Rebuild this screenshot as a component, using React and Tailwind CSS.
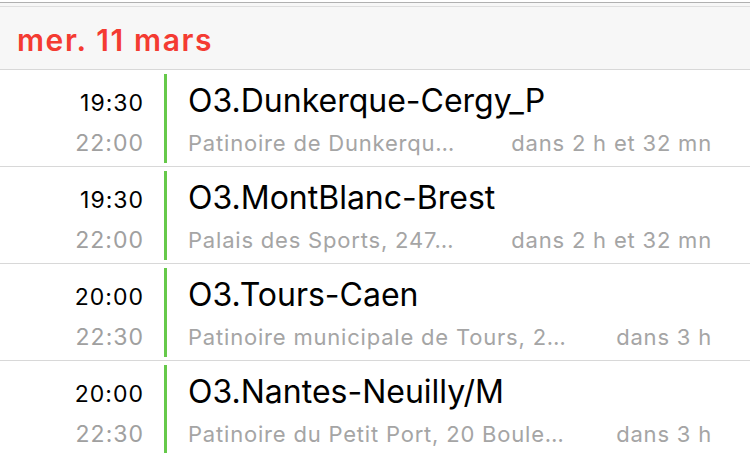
const events = [
  {
    start: "19:30",
    end: "22:00",
    title: "O3.Dunkerque-Cergy_P",
    place: "Patinoire de Dunkerqu…",
    when: "dans 2 h et 32 mn",
  },
  {
    start: "19:30",
    end: "22:00",
    title: "O3.MontBlanc-Brest",
    place: "Palais des Sports, 247…",
    when: "dans 2 h et 32 mn",
  },
  {
    start: "20:00",
    end: "22:30",
    title: "O3.Tours-Caen",
    place: "Patinoire municipale de Tours, 2…",
    when: "dans 3 h",
  },
  {
    start: "20:00",
    end: "22:30",
    title: "O3.Nantes-Neuilly/M",
    place: "Patinoire du Petit Port, 20 Boule…",
    when: "dans 3 h",
  },
];

function EventRow({ event }) {
  return (
    <div className="flex h-[97px] border-b border-[#d8d8d8] bg-white">
      <div className="w-[144px] flex flex-col items-end pt-[19px] gap-[12px] text-[23px] leading-[28px] tracking-[1px]">
        <span className="text-black">{event.start}</span>
        <span className="text-[#a0a0a0]">{event.end}</span>
      </div>
      <div className="ml-[20px] w-[3px] mt-[4px] mb-[3px] bg-[#66c94a]" />
      <div className="flex-1 min-w-0 flex flex-col pl-[21px] pr-[38px] pt-[11px]">
        <div className="text-[32px] leading-[40px] text-black whitespace-nowrap">
          {event.title}
        </div>
        <div className="mt-[8px] flex items-center text-[22px] leading-[28px] tracking-[0.8px] text-[#a5a5a5] whitespace-nowrap">
          <span className="flex-1 min-w-0 truncate">{event.place}</span>
          <span className="ml-[24px]">{event.when}</span>
        </div>
      </div>
    </div>
  );
}

export default function App() {
  return (
    <div
      className="w-[750px] h-[453px] overflow-hidden bg-white"
      style={{ fontFamily: "Inter, 'Liberation Sans', sans-serif" }}
    >
      <div className="h-[2px] bg-white" />
      <div className="h-[1px] bg-[#b0b0b0]" />
      <div className="h-[3px] bg-[#f7f7f7]" />
      <div className="h-[1px] bg-[#dedede]" />
      <div className="h-[63px] bg-[#f7f7f7] border-b border-[#d8d8d8] flex items-center pl-[17px] pt-[4px]">
        <span className="text-[30px] font-semibold tracking-[1.6px] text-[#f43b32]">
          mer. 11 mars
        </span>
      </div>
      {events.map((event, key) => (
        <EventRow key={key} event={event} />
      ))}
    </div>
  );
}
